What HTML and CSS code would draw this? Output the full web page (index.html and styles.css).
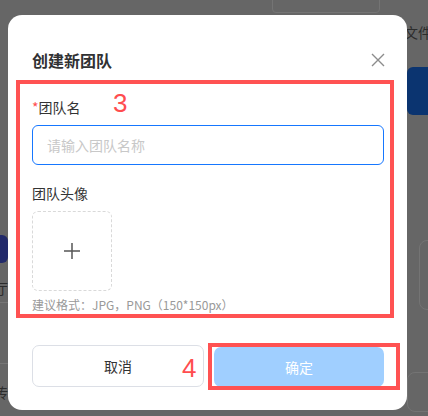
FILE: index.html
```html
<!DOCTYPE html>
<html lang="zh-CN">
<head>
  <meta charset="UTF-8">
  <title>创建新团队</title>
  <link rel="stylesheet" href="styles.css">
</head>
<body>
  <div class="page-behind">
    <div class="bg-tabs"></div>
    <div class="bg-text bg-text-top">文件目</div>
    <div class="bg-btn-right"></div>
    <div class="bg-btn-left"></div>
    <div class="bg-text bg-text-hall">大厅</div>
    <div class="bg-line bg-line-1"></div>
    <div class="bg-line bg-line-2"></div>
    <div class="bg-text bg-text-pass">上传</div>
    <div class="bg-card bg-card-1"></div>
    <div class="bg-card bg-card-2"></div>
  </div>

  <div class="modal">
    <div class="modal-header">
      <h3>创建新团队</h3>
      <span class="close">
        <svg width="14" height="14" viewBox="0 0 14 14">
          <path d="M1 1L13 13M13 1L1 13" stroke="#8c8c8c" stroke-width="1.4" fill="none"/>
        </svg>
      </span>
    </div>

    <div class="mark-box form-area">
      <span class="mark-num num-3">3</span>
      <div class="label"><span class="req">*</span>团队名</div>
      <input type="text" class="name-input" placeholder="请输入团队名称">

      <div class="label label-avatar">团队头像</div>
      <div class="upload">
        <svg width="16" height="16" viewBox="0 0 16 16">
          <path d="M8 0V16M0 8H16" stroke="#555" stroke-width="1.5"/>
        </svg>
      </div>
      <div class="hint">建议格式：JPG，PNG（150*150px）</div>
    </div>

    <div class="modal-footer">
      <button class="btn btn-cancel">取消</button>
      <button class="btn btn-ok">确定</button>
      <span class="mark-num num-4">4</span>
      <div class="mark-box mark-ok"></div>
    </div>
  </div>
</body>
</html>
```

FILE: styles.css
```css
* {
box-sizing: border-box;
}

body {
margin: 0;
width: 428px;
height: 416px;
overflow: hidden;
background-color: #666666;
font-family: "Noto Sans CJK SC", "Noto Sans", sans-serif;
color: #333;
position: relative;
}

/* page under the overlay */
.page-behind div {
position: absolute;
}

.bg-tabs {
left: 272px;
top: -6px;
width: 108px;
height: 19px;
border: 1px solid #747474;
border-radius: 4px;
}

.bg-text {
color: #2c2c2c;
font-size: 14px;
line-height: 20px;
white-space: nowrap;
}

.bg-text-top {
left: 404px;
top: 22px;
}

.bg-btn-right {
left: 407px;
top: 67px;
width: 40px;
height: 48px;
background-color: #0b3470;
border-radius: 6px;
}

.bg-btn-left {
left: -20px;
top: 235px;
width: 28px;
height: 28px;
background-color: #222a6a;
border-radius: 6px;
}

.bg-text-hall {
left: -20px;
top: 278px;
}

.bg-text-pass {
left: -20px;
top: 382px;
}

.bg-line {
left: 0;
width: 8px;
height: 1px;
background-color: #767676;
}

.bg-line-1 {
top: 302px;
}

.bg-line-2 {
top: 363px;
}

.bg-card {
border: 1px solid #747474;
border-radius: 8px;
}

.bg-card-1 {
left: 419px;
top: 240px;
width: 30px;
height: 70px;
}

.bg-card-2 {
left: 407px;
top: 372px;
width: 30px;
height: 40px;
}

/* dialog */
.modal {
position: absolute;
left: 8px;
top: 15px;
width: 399px;
height: 395px;
background-color: #fff;
border-radius: 14px;
}

.modal-header {
display: flex;
justify-content: space-between;
align-items: center;
padding: 25px 22px 0 24px;
height: 65px;
}

.modal-header h3 {
margin: 0;
font-size: 16px;
line-height: 24px;
font-weight: 700;
color: #303133;
}

.close {
display: flex;
margin-top: -1px;
}

.mark-box {
border: 4px solid #ff5252;
}

.mark-num {
position: absolute;
font-family: "Liberation Sans", Arial, sans-serif;
font-size: 26px;
line-height: 26px;
color: #ff4d4f;
}

.form-area {
position: relative;
margin-left: 8px;
width: 378px;
padding: 12px 6px 0 12px;
height: 238px;
}

.num-3 {
left: 93px;
top: 6px;
}

.label {
font-size: 14px;
line-height: 22px;
color: #333;
}

.req {
color: #ff4d4f;
}

.name-input {
display: block;
margin-top: 7px;
width: 352px;
height: 40px;
border: 1px solid #1677ff;
border-radius: 6px;
padding: 0 14px;
font-family: inherit;
font-size: 14px;
outline: none;
}

.name-input::placeholder {
color: #c8c8c8;
}

.label-avatar {
margin-top: 17px;
}

.upload {
margin-top: 7px;
width: 80px;
height: 80px;
border: 1px dashed #d9d9d9;
border-radius: 6px;
display: flex;
justify-content: center;
align-items: center;
}

.hint {
margin-top: 5px;
font-size: 12px;
line-height: 18px;
color: #999;
}

.modal-footer {
position: relative;
display: flex;
gap: 10px;
margin: 27px 23px 0 24px;
}

.btn {
flex: 1;
height: 42px;
border-radius: 7px;
font-family: inherit;
font-size: 14px;
cursor: pointer;
}

.btn-cancel {
background-color: #fff;
border: 1px solid #dcdfe6;
color: #333;
}

.btn-ok {
background-color: #a0cfff;
border: none;
color: #fff;
height: 40px;
margin-top: 2px;
}

.num-4 {
left: 150px;
top: 10px;
}

.mark-ok {
position: absolute;
left: 176px;
top: -2px;
width: 192px;
height: 47px;
}
```
